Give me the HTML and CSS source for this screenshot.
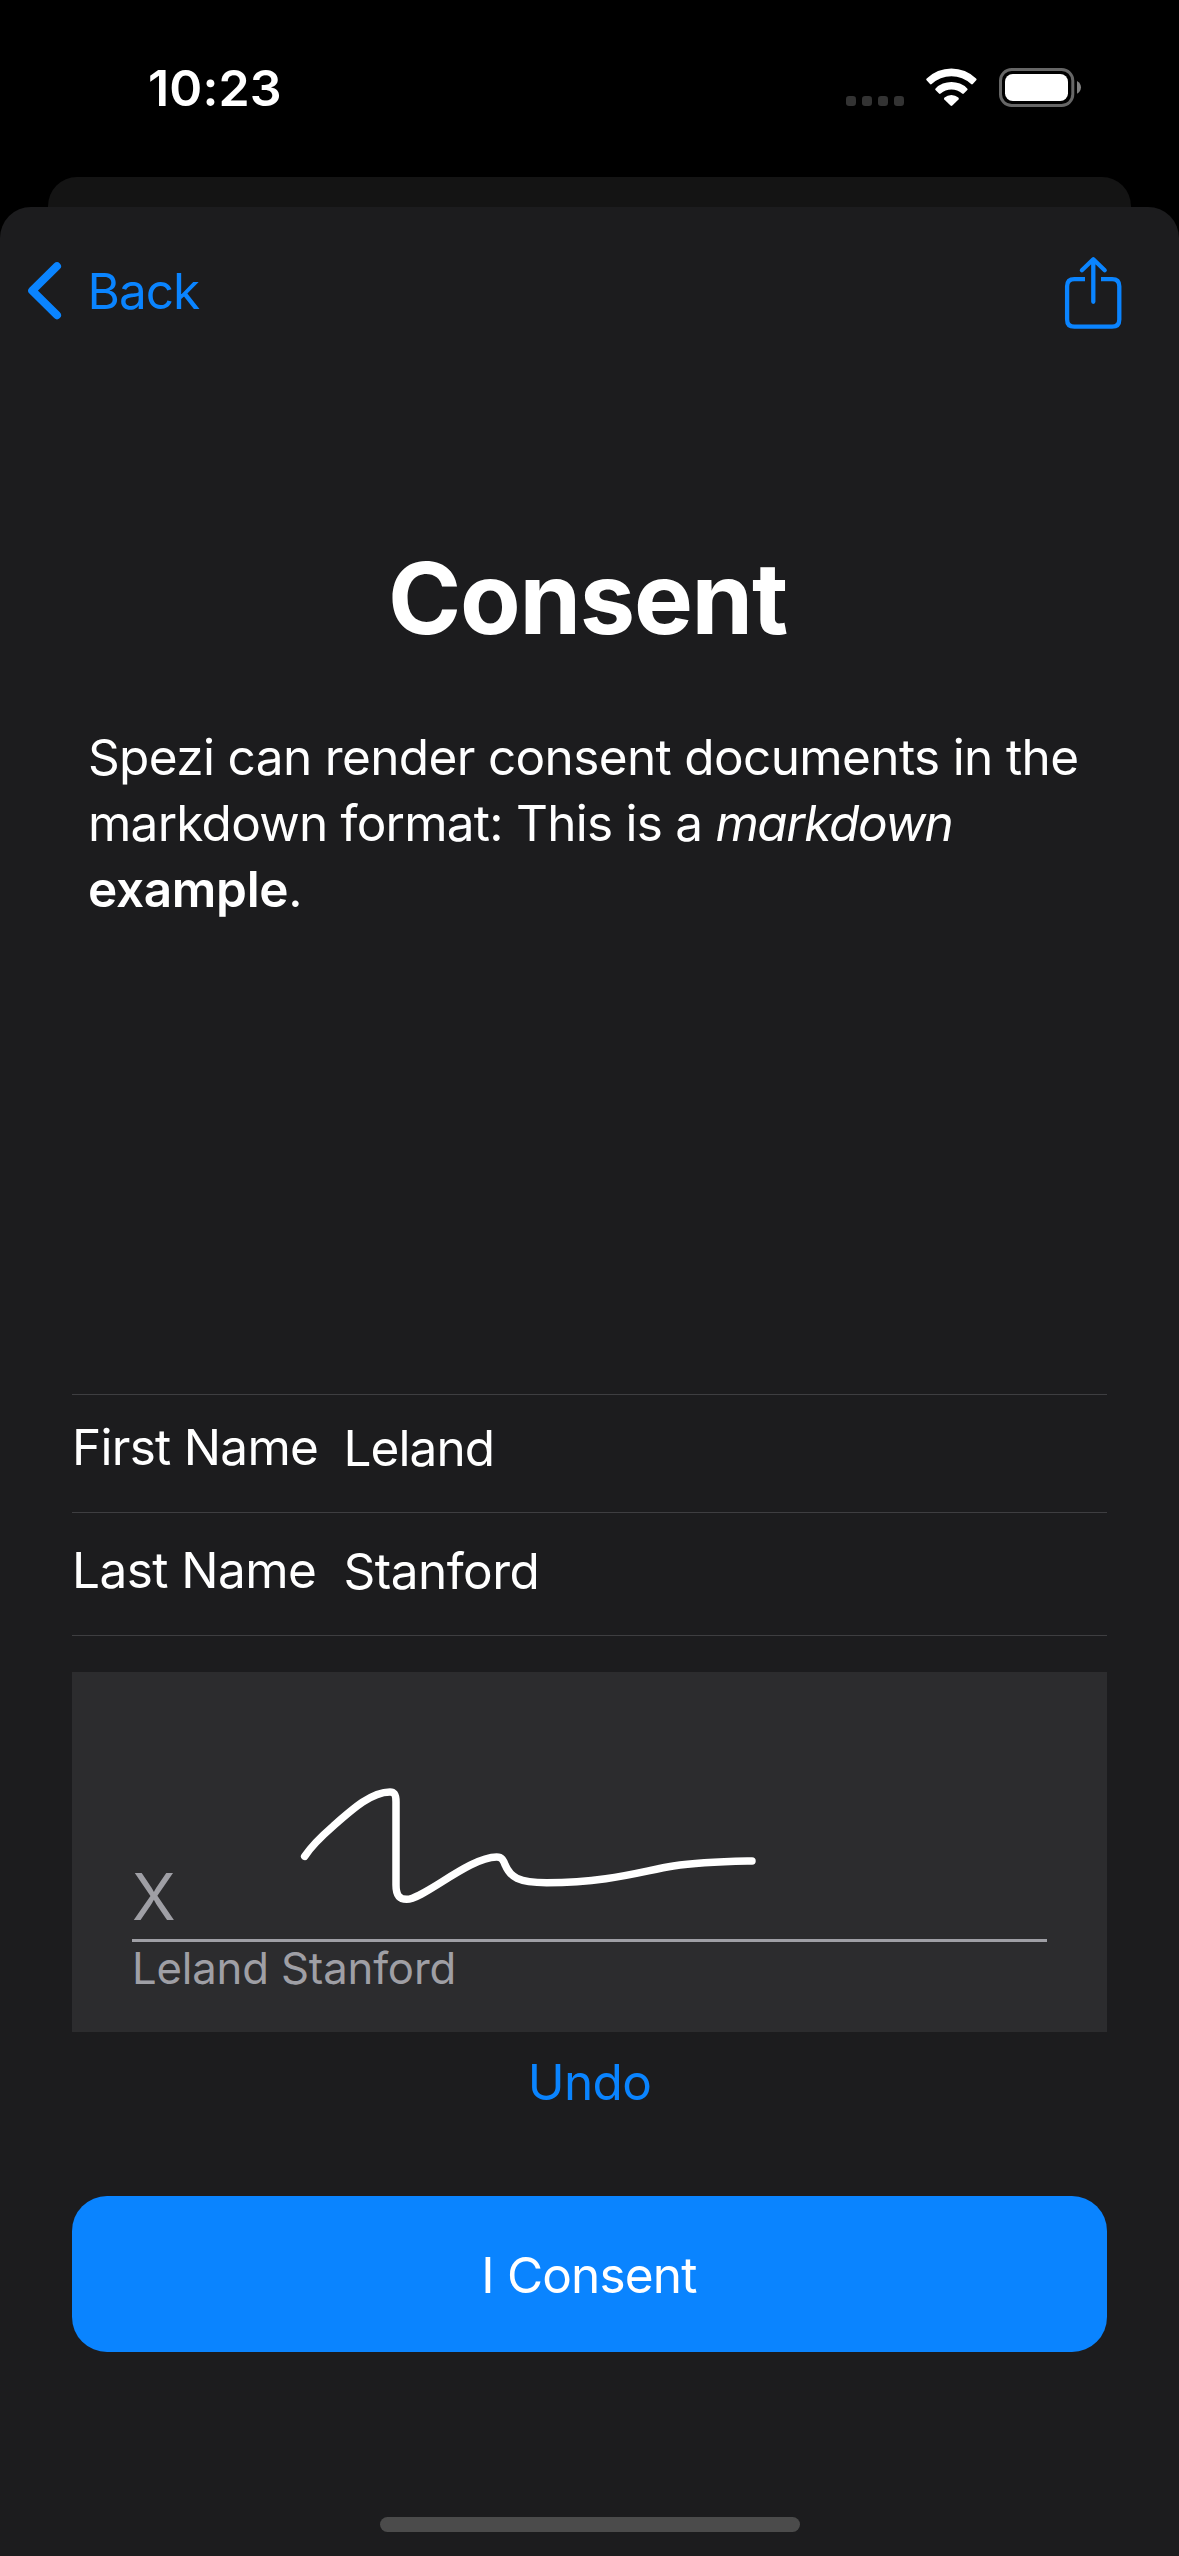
FILE: index.html
```html
<!DOCTYPE html>
<html lang="en">
<head>
<meta charset="utf-8">
<title>Consent</title>
<link rel="stylesheet" href="styles.css">
</head>
<body>
<header class="status">
  <time class="clock">10:23</time>
  <div class="indicators">
    <svg width="58" height="40" viewBox="0 0 58 40" fill="#333" aria-hidden="true">
      <rect x="0" y="28" width="10" height="10" rx="3.2"/>
      <rect x="16" y="28" width="10" height="10" rx="3.2"/>
      <rect x="32" y="28" width="10" height="10" rx="3.2"/>
      <rect x="48" y="28" width="10" height="10" rx="3.2"/>
    </svg>
    <svg width="51" height="40" viewBox="0 0 51 40" fill="#fff" aria-hidden="true">
      <path d="M.7 10.6A35 35 0 0 1 50.1 10.6Q51 11.4 50.2 12.3L46.8 16Q46 16.8 45.1 16A28.6 28.6 0 0 0 5.7 16Q4.8 16.8 4 16L.6 12.3Q-.2 11.4 .7 10.6Z"/>
      <path d="M9.6 20.4A22.5 22.5 0 0 1 41.2 20.4Q42.1 21.3 41.3 22.1L37.8 25.6Q37 26.3 36.1 25.5A16.5 16.5 0 0 0 14.7 25.5Q13.8 26.3 13 25.6L9.5 22.1Q8.7 21.3 9.6 20.4Z"/>
      <path d="M18.5 29.6A10.6 10.6 0 0 1 32.3 29.6Q33.3 30.5 32.5 31.4L26.3 37.6Q25.4 38.4 24.5 37.6L18.3 31.4Q17.5 30.5 18.5 29.6Z"/>
    </svg>
    <svg width="83" height="40" viewBox="0 0 83 40" aria-hidden="true">
      <rect x="1.5" y="1.5" width="72.3" height="36" rx="11.2" fill="none" stroke="#666" stroke-width="3"/>
      <rect x="6" y="6" width="63" height="27" rx="7.8" fill="#fff"/>
      <path d="M78 13C83.3 15.5 83.3 23.2 78 25.7Z" fill="#808080"/>
    </svg>
  </div>
</header>
<div class="card-behind"></div>
<main class="sheet">
  <nav class="nav">
    <a class="back">
      <svg width="36" height="60" viewBox="0 0 36 60" aria-hidden="true">
        <path d="M31 5.2 6.2 29.7 31 54.2" fill="none" stroke="currentColor" stroke-width="8" stroke-linecap="round" stroke-linejoin="round"/>
      </svg>
      <span>Back</span>
    </a>
    <svg class="share" width="60" height="80" viewBox="0 0 60 80" fill="none" stroke="currentColor" stroke-width="4.3" aria-label="Share">
      <path d="M22 28.1H11.3Q4.1 28.1 4.1 35.3V68.4Q4.1 75.6 11.3 75.6H49.1Q56.3 75.6 56.3 68.4V35.3Q56.3 28.1 49.1 28.1H38"/>
      <path d="M30.3 8.6V50.8M18.9 19.2 30.3 8.2 41.7 19.2" stroke-linecap="round" stroke-linejoin="round"/>
    </svg>
  </nav>
  <section class="document">
    <h1 class="title">Consent</h1>
    <p class="text">Spezi can render consent documents in the<br><span class="lead">markdown format: This is a </span><em>markdown</em><br><strong>example</strong>.</p>
  </section>
  <dl class="fields">
    <div class="field">
      <dt class="first-label">First Name</dt>
      <dd class="first-value">Leland</dd>
    </div>
    <div class="field field-last">
      <dt>Last Name</dt>
      <dd>Stanford</dd>
    </div>
  </dl>
  <section class="signature">
    <div class="mark">X</div>
    <div class="rule"></div>
    <div class="signer">Leland Stanford</div>
    <svg class="ink" viewBox="0 0 3105 1080" aria-hidden="true">
      <path transform="translate(-66 -66)" d="M764 619C790 580 820 554 850 528C910 475 965 426 1020 426C1033 426 1038 432 1038 455V705C1038 735 1047 748 1070 748C1120 748 1258 621 1340 621C1356 621 1360 630 1366 646C1381 681 1404 698 1490 698C1680 698 1780 662 1870 648C1950 636 2020 635 2106 633"/>
    </svg>
  </section>
  <a class="undo">Undo</a>
  <button class="consent">I Consent</button>
  <div class="home"></div>
</main>
</body>
</html>
```
FILE: styles.css
```css
* {
  box-sizing: border-box;
  margin: 0;
  padding: 0;
}

body {
  display: flex;
  flex-direction: column;
  height: 2556px;
  background: #000;
  color: #fff;
  font: 400 49.5px/66px Inter, "Liberation Sans", sans-serif;
  letter-spacing: -0.64px;
}

.status {
  display: flex;
  justify-content: space-between;
  height: 177px;
  padding: 58px 97px 0 148px;
}

.clock {
  font-size: 50px;
  font-weight: 600;
  line-height: 60px;
  letter-spacing: 0.15px;
}

.indicators {
  display: flex;
  gap: 22px;
  padding-top: 10px;
}

.card-behind {
  flex: none;
  height: 62px;
  margin: 0 48px -32px;
  border-radius: 29px 29px 0 0;
  background: #141414;
}

.sheet {
  position: relative;
  display: flex;
  flex: 1;
  flex-direction: column;
  padding: 0 72px 24px;
  border-radius: 31px 31px 0 0;
  background: #1c1c1e;
}

.nav {
  display: flex;
  align-items: center;
  justify-content: space-between;
  height: 168px;
  margin: 0 -16px 0 -46px;
  color: #0a84ff;
}

.back {
  display: flex;
  align-items: center;
  gap: 25.5px;
  letter-spacing: -0.95px;
}

.document {
  flex: 1;
  padding: 163px 0 0 16px;
}

.title {
  padding-right: 20px;
  font-size: 99px;
  font-weight: 700;
  line-height: 120px;
  letter-spacing: -1.3px;
  text-align: center;
}

.text {
  margin-top: 66px;
  white-space: nowrap;
}

.lead {
  letter-spacing: -0.76px;
}

.text em {
  letter-spacing: -1.4px;
}

.text strong {
  font-weight: 600;
  letter-spacing: -0.3px;
}

.fields {
  border-top: 1px solid #3e3e41;
}

.field {
  display: grid;
  grid-template-columns: 271.5px 1fr;
  padding: 19px 0 32px;
  border-bottom: 1px solid #3e3e41;
}

.field dd {
  padding-top: 1px;
  margin-bottom: -1px;
  letter-spacing: -0.5px;
}

.field-last {
  padding-top: 24px;
}

.field-last dt {
  letter-spacing: -0.55px;
}

.first-label {
  letter-spacing: -0.72px;
}

.field .first-value {
  letter-spacing: -0.92px;
}

.signature {
  position: relative;
  height: 360px;
  margin-top: 36px;
  padding: 190px 60px 0;
  background: #2c2c2e;
  color: #9f9fa5;
}

.mark {
  margin-bottom: 7px;
  font-size: 64px;
  line-height: 70px;
}

.rule {
  height: 3px;
  background: #9f9fa5;
}

.signer {
  font-size: 43.7px;
  line-height: 54px;
  letter-spacing: -0.17px;
}

.ink {
  position: absolute;
  inset: 0;
  width: 100%;
  height: 100%;
}

.ink path {
  fill: none;
  stroke: #fff;
  stroke-width: 22.5;
  stroke-linecap: round;
  stroke-linejoin: round;
}

.undo {
  align-self: center;
  margin-top: 17px;
  color: #0a84ff;
  letter-spacing: -0.7px;
}

.consent {
  height: 156px;
  margin-top: 81px;
  padding: 2px 1px 0 0;
  border: 0;
  border-radius: 35px;
  background: #0a84ff;
  color: #fff;
  font: inherit;
  letter-spacing: -0.82px;
}

.home {
  align-self: center;
  width: 420px;
  height: 15px;
  margin-top: 165px;
  border-radius: 8px;
  background: #4b4b4b;
}
```
